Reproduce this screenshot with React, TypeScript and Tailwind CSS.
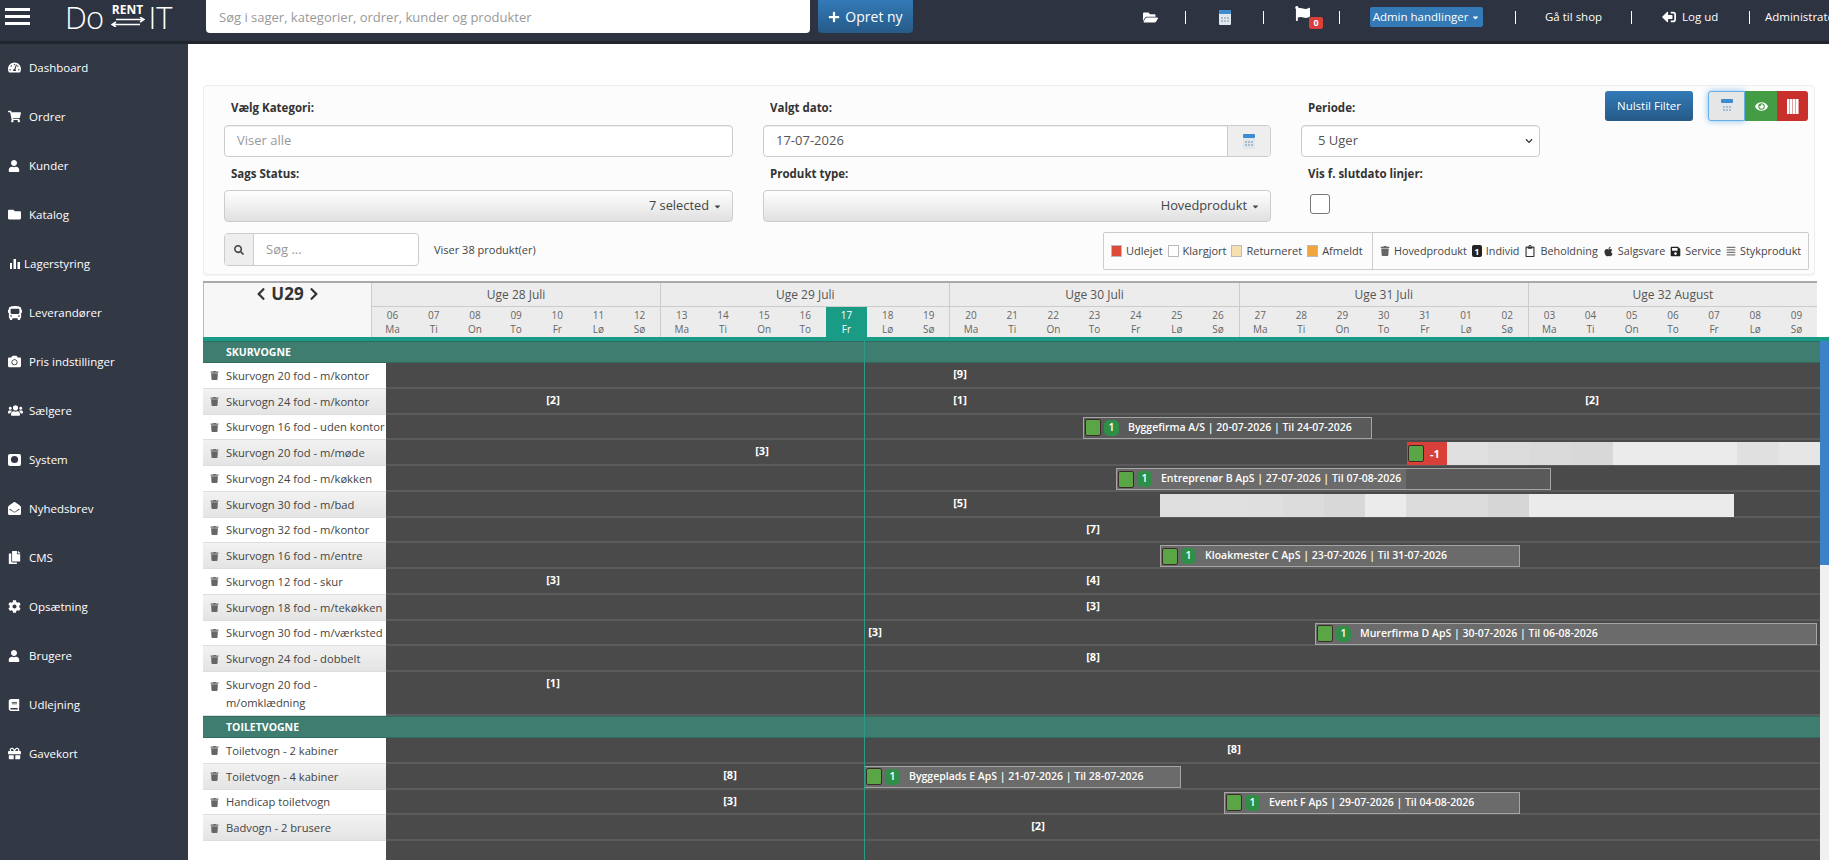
import React from "react";
import {
  FaTachometerAlt, FaShoppingCart, FaUser, FaFolder, FaBus, FaCamera, FaUsers, FaEnvelopeOpen, FaCopy, FaCog, FaBook, FaGift,
  FaFolderOpen, FaFlag, FaSignOutAlt, FaTrash, FaApple, FaAlignJustify, FaEye, FaSearch, FaChevronLeft, FaChevronRight, FaPlus, FaCaretDown, FaChevronDown, FaSave, FaRegClipboard,
} from "react-icons/fa";

const Bars = () => (
  <svg width="10" height="10" viewBox="0 0 10 10" fill="currentColor"><rect x="0" y="4" width="2" height="6" /><rect x="3.5" y="0" width="2.5" height="10" /><rect x="7.5" y="3" width="2.5" height="7" /></svg>
);
const HddBox = () => (
  <svg width="13" height="12" viewBox="0 0 13 12"><rect width="13" height="12" rx="2" fill="#fff" /><circle cx="6.5" cy="5.5" r="3.6" fill="#333845" /></svg>
);
const Cal = () => (
  <svg width="12" height="15" viewBox="0 0 12 15">
    <rect x="0" y="0" width="12" height="15" rx="1" fill="#e2e7ec" />
    <rect x="0" y="0" width="12" height="4" rx="1" fill="#3d8bd0" />
    {[2, 5, 8].map((x) => [7, 10].map((y) => <rect key={x + "-" + y} x={x} y={y} width="2" height="2" fill="#a9bccd" />))}
  </svg>
);

const nav: [string, React.ReactNode, boolean?][] = [
  ["Dashboard", <FaTachometerAlt size={13} />],
  ["Ordrer", <FaShoppingCart size={13} />],
  ["Kunder", <FaUser size={12} />],
  ["Katalog", <FaFolder size={13} />],
  ["Lagerstyring", <Bars />, true],
  ["Leverandører", <FaBus size={14} />],
  ["Pris indstillinger", <FaCamera size={13} />],
  ["Sælgere", <FaUsers size={15} />],
  ["System", <HddBox />],
  ["Nyhedsbrev", <FaEnvelopeOpen size={13} />],
  ["CMS", <FaCopy size={13} />],
  ["Opsætning", <FaCog size={13} />],
  ["Brugere", <FaUser size={12} />],
  ["Udlejning", <FaBook size={12} />],
  ["Gavekort", <FaGift size={13} />],
];

const Sep = ({ ml }: { ml: string }) => <span className={`h-[13px] w-px shrink-0 bg-white ${ml}`} />;

function TopBar() {
  return (
    <div className="flex h-[44px] shrink-0 items-start border-b-[3px] border-[#20252e] bg-[#2d3340]">
      <div className="ml-[5px] mt-[8px] flex w-[25px] shrink-0 flex-col gap-[4px]">
        <div className="h-[3px] bg-white" /><div className="h-[3px] bg-white" /><div className="h-[3px] bg-white" />
      </div>
      <div className="ml-[35px] flex w-[141px] shrink-0 items-start text-white">
        <span className="text-[31px] font-light leading-[34px] tracking-tight">Do</span>
        <span className="ml-[7px] flex w-[34px] flex-col items-center">
          <span className="mt-[3px] text-[12px] font-bold leading-[14px]">RENT</span>
          <svg width="34" height="10" viewBox="0 0 34 10" fill="none" stroke="#fff" strokeWidth="1.5"><path d="M5 2.5H33M29 0l4 2.5L29 5M1 7.500H29M5 5L1 7.500 5 10" /></svg>
        </span>
        <span className="ml-[4px] text-[31px] font-light leading-[34px]">IT</span>
      </div>
      <input readOnly placeholder="Søg i sager, kategorier, ordrer, kunder og produkter" className="h-[33px] w-[604px] shrink-0 rounded-b-[4px] bg-white px-[13px] text-[13px] text-[#555] outline-none placeholder:text-[#999]" />
      <button className="ml-[8px] flex h-[33px] w-[95px] shrink-0 items-center justify-center gap-[5px] rounded-b-[4px] bg-gradient-to-b from-[#337ab7] to-[#265a88] text-[14px] text-white">
        <FaPlus size={12} />Opret ny
      </button>
      <div className="flex h-[34px] min-w-0 flex-1 items-center overflow-hidden whitespace-nowrap text-[11.5px] text-white">
        <FaFolderOpen size={15} className="ml-[230px] shrink-0" />
        <Sep ml="ml-[27px]" />
        <span className="ml-[33px] flex shrink-0"><Cal /></span>
        <Sep ml="ml-[32px]" />
        <span className="relative ml-[31px] flex h-[24px] w-[16px] shrink-0 items-start">
          <FaFlag size={15} className="mt-px" />
          <span className="absolute left-[14px] top-[12px] flex h-[12px] w-[14px] items-center justify-center rounded-[2px] bg-[#d9403a] text-[9px] font-bold">0</span>
        </span>
        <Sep ml="ml-[28px]" />
        <span className="ml-[30px] flex h-[20px] w-[113px] shrink-0 items-center justify-center gap-[3px] rounded-[2px] bg-[#337ab7]">Admin handlinger<FaCaretDown size={9} /></span>
        <Sep ml="ml-[32px]" />
        <span className="ml-[29px] w-[56px] shrink-0">Gå til shop</span>
        <Sep ml="ml-[30px]" />
        <FaSignOutAlt size={14} className="ml-[30px] shrink-0 -scale-x-100" />
        <span className="ml-[6px] w-[36px] shrink-0">Log ud</span>
        <Sep ml="ml-[31px]" />
        <span className="ml-[15px] shrink-0">Administrator</span>
      </div>
    </div>
  );
}

function Sidebar() {
  return (
    <div className="w-[188px] shrink-0 bg-[#333845] text-[11.5px] text-white">
      {nav.map(([t, icon, small]) => (
        <div key={t} className="flex h-[49px] items-center pb-[2px]">
          <span className={small ? "ml-[10px] flex w-[14px] shrink-0" : "ml-[8px] flex w-[21px] shrink-0"}>{icon}</span>
          <span>{t}</span>
        </div>
      ))}
    </div>
  );
}

const Label = ({ children }: { children: React.ReactNode }) => <div className="flex h-[20px] items-center pl-[7px] pt-[2px] text-[11.5px] font-bold text-[#333]">{children}</div>;
const inputCls = "h-[32px] rounded-[4px] border border-[#ccc] bg-white shadow-[inset_0_1px_1px_rgba(0,0,0,0.075)]";
const ddCls = "flex h-[32px] items-center justify-end gap-[4px] rounded-[4px] border border-[#ccc] bg-gradient-to-b from-[#fff] to-[#e0e0e0] pr-[10px] text-[12.8px] text-[#444]";

function Filter() {
  return (
    <div className="h-[190px] w-[1612px] rounded-[4px] border border-[#eee] bg-[#fcfcfc] pl-[20px] pr-[5px] pt-[5px] shadow-[0_1px_1px_rgba(0,0,0,0.05)]">
      <div className="flex">
        <div className="grid grid-cols-[509px_508px_239px] gap-x-[30px] pt-[6px]">
          <div>
            <Label>Vælg Kategori:</Label>
            <div className={`${inputCls} mt-[8px] flex items-center px-[12px] text-[13px] text-[#999]`}>Viser alle</div>
          </div>
          <div>
            <Label>Valgt dato:</Label>
            <div className={`${inputCls} mt-[8px] flex items-stretch overflow-hidden text-[13px] text-[#555]`}>
              <span className="flex flex-1 items-center px-[12px]">17-07-2026</span>
              <span className="flex w-[43px] items-center justify-center border-l border-[#ccc] bg-[#eee]"><Cal /></span>
            </div>
          </div>
          <div>
            <Label>Periode:</Label>
            <div className={`${inputCls} mt-[8px] flex items-center justify-between px-[16px] pr-[6px] text-[13px] text-[#555]`}>5 Uger<FaChevronDown size={8} className="text-[#333]" /></div>
          </div>
          <div className="mt-[6px]">
            <Label>Sags Status:</Label>
            <div className={`${ddCls} mt-[7px]`}>7 selected<FaCaretDown size={9} /></div>
          </div>
          <div className="mt-[6px]">
            <Label>Produkt type:</Label>
            <div className={`${ddCls} mt-[7px]`}>Hovedprodukt<FaCaretDown size={9} /></div>
          </div>
          <div className="mt-[6px]">
            <Label>Vis f. slutdato linjer:</Label>
            <div className="ml-[9px] mt-[11px] h-[20px] w-[20px] rounded-[3px] border border-[#777] bg-white" />
          </div>
        </div>
        <div className="ml-[65px] flex h-[31px] items-start">
          <button className="h-[30px] w-[88px] rounded-[3px] bg-gradient-to-b from-[#337ab7] to-[#265a88] text-[11.5px] font-medium text-white">Nulstil Filter</button>
          <div className="ml-[15px] flex h-[30px] w-[100px]">
            <span className="flex w-[37px] items-center justify-center rounded-l-[3px] border border-[#66afe9] bg-[#e6e6e6] shadow-[0_0_6px_rgba(102,175,233,0.8)]"><Cal /></span>
            <span className="flex w-[32px] items-center justify-center bg-[#449d44] text-white"><FaEye size={13} /></span>
            <span className="flex w-[31px] items-center justify-center rounded-r-[3px] bg-[#c9302c]">
              <span className="h-[15px] w-[12px] bg-[repeating-linear-gradient(90deg,#fff_0,#fff_2px,#e8a09c_2px,#e8a09c_3px)]" />
            </span>
          </div>
        </div>
      </div>
      <div className="mt-[11px] flex items-start">
        <div className="flex h-[33px] w-[195px] overflow-hidden rounded-[4px] border border-[#ccc] bg-white">
          <span className="flex w-[29px] items-center justify-center border-r border-[#ccc] bg-[#eee] text-[#444]"><FaSearch size={10} /></span>
          <span className="flex flex-1 items-center px-[12px] text-[13px] text-[#999]">Søg ...</span>
        </div>
        <span className="ml-[15px] flex h-[33px] items-center pt-[2px] text-[11px] text-[#444]">Viser 38 produkt(er)</span>
        <Legend />
      </div>
    </div>
  );
}

const Swatch = ({ c }: { c: string }) => <span className={`h-[12px] w-[11px] shrink-0 border border-[#bbb] ${c}`} />;
function Legend() {
  const left: [string, string][] = [["Udlejet", "bg-[#dd4b39]"], ["Klargjort", "bg-white"], ["Returneret", "bg-[#f6dfb0]"], ["Afmeldt", "bg-[#f0a63c]"]];
  const right: [string, React.ReactNode][] = [
    ["Hovedprodukt", <FaTrash size={10} className="text-[#666]" />],
    ["Individ", <span className="flex h-[12px] w-[10px] items-center justify-center rounded-[2px] bg-[#222] text-[9px] font-bold leading-none text-white">1</span>],
    ["Beholdning", <FaRegClipboard size={12} className="text-[#333]" />],
    ["Salgsvare", <FaApple size={11} className="text-[#333]" />],
    ["Service", <FaSave size={11} className="text-[#222]" />],
    ["Stykprodukt", <FaAlignJustify size={10} className="text-[#777]" />],
  ];
  return (
    <div className="ml-auto flex h-[38px] w-[706px] -translate-y-px items-center rounded-[2px] border border-[#ccc] text-[11px] text-[#444]">
      <div className="flex h-full w-[269px] items-center gap-[5px] border-r border-[#ccc] pl-[7px]">
        {left.map(([t, c]) => <span key={t} className="flex items-center gap-[4px] whitespace-nowrap"><Swatch c={c} />{t}</span>)}
      </div>
      <div className="flex h-full flex-1 items-center gap-[5px] pl-[7px] text-[10.8px]">
        {right.map(([t, ic]) => <span key={t} className="flex items-center gap-[4px] whitespace-nowrap">{ic}{t}</span>)}
      </div>
    </div>
  );
}

const weeks = [
  ["Uge 28 Juli", ["06", "07", "08", "09", "10", "11", "12"]],
  ["Uge 29 Juli", ["13", "14", "15", "16", "17", "18", "19"]],
  ["Uge 30 Juli", ["20", "21", "22", "23", "24", "25", "26"]],
  ["Uge 31 Juli", ["27", "28", "29", "30", "31", "01", "02"]],
  ["Uge 32 August", ["03", "04", "05", "06", "07", "08", "09"]],
] as [string, string[]][];
const dn = ["Ma", "Ti", "On", "To", "Fr", "Lø", "Sø"];

function GanttHeader() {
  return (
    <div className="flex h-[56px] w-[1614px] border-t-2 border-[#a9a9a9]">
      <div className="flex w-[168px] shrink-0 items-start justify-center gap-[3px] border-l border-[#bbb] bg-[#f7f7f7] text-[#333]">
        <FaChevronLeft size={14} className="mt-[4px]" />
        <span className="text-[17px] font-bold leading-[22px]">U29</span>
        <FaChevronRight size={14} className="mt-[4px]" />
      </div>
      {weeks.map(([w, ds]) => (
        <div key={w} className="flex-1 border-l border-[#ccc] bg-[#ececec]">
          <div className="flex h-[24px] items-center justify-center border-b border-[#ccc] text-[12px] text-[#555]">{w}</div>
          <div className="flex h-[30px]">
            {ds.map((d, i) => {
              const today = d === "17";
              return (
                <div key={d} className={today ? "flex flex-1 flex-col items-center justify-center bg-[#1a9b85] text-[10px] leading-[14px] text-white" : "flex flex-1 flex-col items-center justify-center text-[10px] leading-[14px] text-[#666]"}>
                  <span>{d}</span><span>{dn[i]}</span>
                </div>
              );
            })}
          </div>
        </div>
      ))}
    </div>
  );
}

type Bar = { l: number; w: number; t: string; inner?: number; bright?: boolean };
type Row = { n: string; marks?: [number, string][]; bar?: Bar; red?: number; cells?: { l: number; w: number; c: string[] }; tall?: boolean };

const sk: Row[] = [
  { n: "Skurvogn 20 fod - m/kontor", marks: [[574, "[9]"]] },
  { n: "Skurvogn 24 fod - m/kontor", marks: [[167, "[2]"], [574, "[1]"], [1206, "[2]"]] },
  { n: "Skurvogn 16 fod - uden kontor", bar: { l: 697, w: 289, t: "Byggefirma A/S | 20-07-2026 | Til 24-07-2026" } },
  { n: "Skurvogn 20 fod - m/møde", marks: [[376, "[3]"]], red: 1021, cells: { l: 1061, w: 373, c: ["bg-[#e0e0e0]", "bg-[#dcdcdc]", "bg-[#dadada]", "bg-[#d8d8d8]", "bg-[#ebebeb]", "bg-[#ebebeb]", "bg-[#ebebeb]", "bg-[#e0e0e0]", "bg-[#e6e6e6]"] } },
  { n: "Skurvogn 24 fod - m/køkken", bar: { l: 730, w: 435, t: "Entreprenør B ApS | 27-07-2026 | Til 07-08-2026", inner: 289 } },
  { n: "Skurvogn 30 fod - m/bad", marks: [[574, "[5]"]], cells: { l: 774, w: 574, c: ["bg-[#dedede]", "bg-[#e0e0e0]", "bg-[#dfdfdf]", "bg-[#dcdcdc]", "bg-[#d8d8d8]", "bg-[#ebebeb]", "bg-[#dcdcdc]", "bg-[#dcdcdc]", "bg-[#d6d6d6]", "bg-[#ebebeb]", "bg-[#ebebeb]", "bg-[#ebebeb]", "bg-[#ebebeb]", "bg-[#ebebeb]"] } },
  { n: "Skurvogn 32 fod - m/kontor", marks: [[707, "[7]"]] },
  { n: "Skurvogn 16 fod - m/entre", bar: { l: 774, w: 360, t: "Kloakmester C ApS | 23-07-2026 | Til 31-07-2026", bright: true } },
  { n: "Skurvogn 12 fod - skur", marks: [[167, "[3]"], [707, "[4]"]] },
  { n: "Skurvogn 18 fod - m/tekøkken", marks: [[707, "[3]"]] },
  { n: "Skurvogn 30 fod - m/værksted", marks: [[489, "[3]"]], bar: { l: 929, w: 502, t: "Murerfirma D ApS | 30-07-2026 | Til 06-08-2026", bright: true } },
  { n: "Skurvogn 24 fod - dobbelt", marks: [[707, "[8]"]] },
  { n: "Skurvogn 20 fod - m/omklædning", marks: [[167, "[1]"]], tall: true },
];
const to: Row[] = [
  { n: "Toiletvogn - 2 kabiner", marks: [[848, "[8]"]] },
  { n: "Toiletvogn - 4 kabiner", marks: [[344, "[8]"]], bar: { l: 478, w: 317, t: "Byggeplads E ApS | 21-07-2026 | Til 28-07-2026", bright: true } },
  { n: "Handicap toiletvogn", marks: [[344, "[3]"]], bar: { l: 838, w: 296, t: "Event F ApS | 29-07-2026 | Til 04-08-2026", bright: true } },
  { n: "Badvogn - 2 brusere", marks: [[652, "[2]"]] },
];

const Square = () => <span className="h-[17px] w-[16px] shrink-0 rounded-[2px] border border-[#3a2a28] bg-[#5aa546]" />;

function GRow({ r, odd }: { r: Row; odd: boolean }) {
  return (
    <div className={r.tall ? "flex h-[44px]" : "flex h-[25.75px]"}>
      <div className={`flex w-[183px] shrink-0 items-center gap-[7px] border-b border-[#ddd] pl-[7px] pt-px text-[11.2px] leading-[18px] text-[#444] ${odd ? "bg-gradient-to-b from-[#f2f2f2] to-[#e4e4e4]" : "bg-white"}`}>
        <FaTrash size={9} className={r.tall ? "mb-[16px] shrink-0 text-[#666]" : "shrink-0 text-[#666]"} />
        <span className={r.tall ? "w-[160px]" : "w-[160px] whitespace-nowrap"}>{r.n}</span>
      </div>
      <div className="relative flex-1 border-b-2 border-[#5b5b5b] bg-[#4a4a4a]">
        {r.marks?.map(([x, m]) => (
          <span key={x} className="absolute top-[3px] -translate-x-1/2 text-[11px] font-bold text-white" style={{ left: x }}>{m}</span>
        ))}
        {r.cells && (
          <div className="absolute top-[2px] flex h-[23px]" style={{ left: r.cells.l, width: r.cells.w }}>
            {r.cells.c.map((c, i) => <span key={i} className={`flex-1 ${c}`} />)}
          </div>
        )}
        {r.red !== undefined && (
          <div className="absolute top-[2px] flex h-[23px] w-[40px] items-center gap-[6px] bg-[#d9403a] pl-[1px] text-[11px] font-bold text-white" style={{ left: r.red }}>
            <Square />-1
          </div>
        )}
        {r.bar && (
          <div className={`absolute top-[2px] flex h-[22px] items-center whitespace-nowrap border border-[#a5a5a5] text-[10.5px] font-semibold text-white ${r.bar.bright ? "bg-[#6b6b6b]" : "bg-[#5a5a5a]"}`} style={{ left: r.bar.l, width: r.bar.w }}>
            {r.bar.inner && <span className="absolute bottom-0 left-0 top-0 bg-[#6b6b6b]" style={{ width: r.bar.inner }} />}
            <span className="relative ml-[1px] flex items-center">
              <Square />
              <span className="ml-[3px] flex h-[16px] w-[15px] items-center justify-center rounded-[5px] bg-[#2f8f47]">1</span>
              <span className="ml-[9px]">{r.bar.t}</span>
            </span>
          </div>
        )}
      </div>
    </div>
  );
}

const Band = ({ t }: { t: string }) => (
  <div className="flex h-[22px] items-center border-y border-[#2f6b5e] bg-[#3e7d70] pl-[23px] pt-[1px] text-[10.5px] font-bold text-white">{t}</div>
);

function GanttBody() {
  return (
    <div className="flex flex-1">
      <div className="relative flex w-[1617px] flex-col">
        <Band t="SKURVOGNE" />
        {sk.map((r, i) => <GRow key={r.n} r={r} odd={i % 2 === 1} />)}
        <Band t="TOILETVOGNE" />
        {to.map((r, i) => <GRow key={r.n} r={r} odd={i % 2 === 1} />)}
        <div className="flex flex-1">
          <div className="w-[183px] bg-white" />
          <div className="flex-1 bg-[#4a4a4a]" />
        </div>
        <span className="absolute bottom-0 left-[661px] top-0 w-px bg-[#2a9c85]" />
      </div>
      <div className="w-[9px] bg-[#f0f0f0]">
        <div className="h-[224px] bg-[#3b82c9]" />
      </div>
    </div>
  );
}

export default function App() {
  return (
    <div className="flex h-[860px] w-[1829px] flex-col overflow-hidden bg-[#333845] font-['Open_Sans','Liberation_Sans',sans-serif]">
      <TopBar />
      <div className="flex h-[816px]">
        <Sidebar />
        <div className="flex flex-1 flex-col overflow-hidden bg-white pl-[15px] pt-[41px]">
          <Filter />
          <div className="mt-[6px]"><GanttHeader /></div>
          <div className="h-[4px] bg-[#1a9b85]" />
          <GanttBody />
        </div>
      </div>
    </div>
  );
}
